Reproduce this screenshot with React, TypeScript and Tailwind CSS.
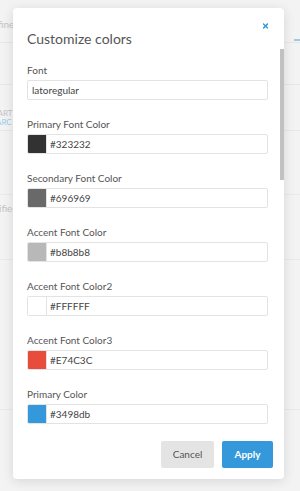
const fields: { label: string; value: string; swatch?: string }[] = [
  { label: 'Font', value: 'latoregular' },
  { label: 'Primary Font Color', value: '#323232', swatch: '#323232' },
  { label: 'Secondary Font Color', value: '#696969', swatch: '#696969' },
  { label: 'Accent Font Color', value: '#b8b8b8', swatch: '#b8b8b8' },
  { label: 'Accent Font Color2', value: '#FFFFFF', swatch: '#FFFFFF' },
  { label: 'Accent Font Color3', value: '#E74C3C', swatch: '#E74C3C' },
  { label: 'Primary Color', value: '#3498db', swatch: '#3498db' },
];

function Field({ label, value, swatch }: { label: string; value: string; swatch?: string }) {
  return (
    <div className="mb-[17px] flex flex-col">
      <label className="h-[14px] text-[10px] leading-[14px] text-[#555]">{label}</label>
      <div className="mt-[3px] flex h-[20px] overflow-hidden rounded-[2px] border border-[#e3e3e3] bg-white">
        {swatch && (
          <div className="h-full w-[19px] shrink-0 border-r border-[#e3e3e3]" style={{ backgroundColor: swatch }} />
        )}
        <div className={`flex items-center text-[10px] text-[#444] ${swatch ? 'pl-[3px]' : 'pl-[4px]'}`}>{value}</div>
      </div>
    </div>
  );
}

function Background() {
  return (
    <div className="flex h-full w-full flex-col bg-[#f3f3f3] text-[10px] text-[#c4c4c4]">
      <div className="flex h-[43px] items-end border-b border-[#e7e7e7] pb-[10px]">
        <span className="ml-[-15px]">Define</span>
        <div className="ml-auto mb-[-9px] h-[2px] w-[6px] bg-[#9cc9e8]" />
      </div>
      <div className="h-[42px] border-b border-[#e8e8e8]" />
      <div className="flex h-[46px] flex-col justify-end border-b border-[#e8e8e8] pb-[3px] text-[8px] leading-[9px]">
        <span className="ml-[-11px]">START</span>
        <span className="ml-[-13px] text-[#9ccbea]">SEARC</span>
      </div>
      <div className="h-[64px] border-b border-[#eaeaea]" />
      <div className="flex h-[65px] items-start border-b border-[#eaeaea] pt-[6px]">
        <span className="ml-[-22px]">Specified</span>
      </div>
      <div className="h-[150px] border-b border-[#eaeaea]" />
    </div>
  );
}

export default function App() {
  return (
    <div className="relative h-[491px] w-[300px] overflow-hidden" style={{ fontFamily: 'Lato, "Open Sans", sans-serif' }}>
      <Background />
      <div className="absolute left-[13px] top-[8px] flex h-[471px] w-[271px] flex-col rounded-[4px] bg-white shadow-[0_2px_12px_rgba(0,0,0,0.12)]">
        <button className="absolute right-[16px] top-[15px] flex h-[5px] w-[5px] items-center justify-center">
          <svg width="6" height="6" viewBox="0 0 6 6">
            <path d="M0.8 0.8 L5.2 5.2 M5.2 0.8 L0.8 5.2" stroke="#3498db" strokeWidth="1.8" strokeLinecap="square" />
          </svg>
        </button>
        <div className="absolute right-0 top-[41px] h-[131px] w-[4px] bg-[#c1c1c1]" />
        <div className="flex flex-col pl-[14px] pr-[16px] pt-[21px]">
          <h2 className="mb-[14px] h-[20px] text-[14px] leading-[20px] text-[#555]">Customize colors</h2>
          {fields.map((f) => (
            <Field key={f.label} {...f} />
          ))}
        </div>
        <div className="mt-auto flex justify-end gap-[8px] pb-[15px] pr-[11px]">
          <button className="h-[27px] w-[53px] rounded-[2px] bg-[#e4e4e4] text-[10px] text-[#555]">Cancel</button>
          <button className="h-[27px] w-[51px] rounded-[2px] bg-[#3498db] text-[10px] font-bold text-white">Apply</button>
        </div>
      </div>
    </div>
  );
}
